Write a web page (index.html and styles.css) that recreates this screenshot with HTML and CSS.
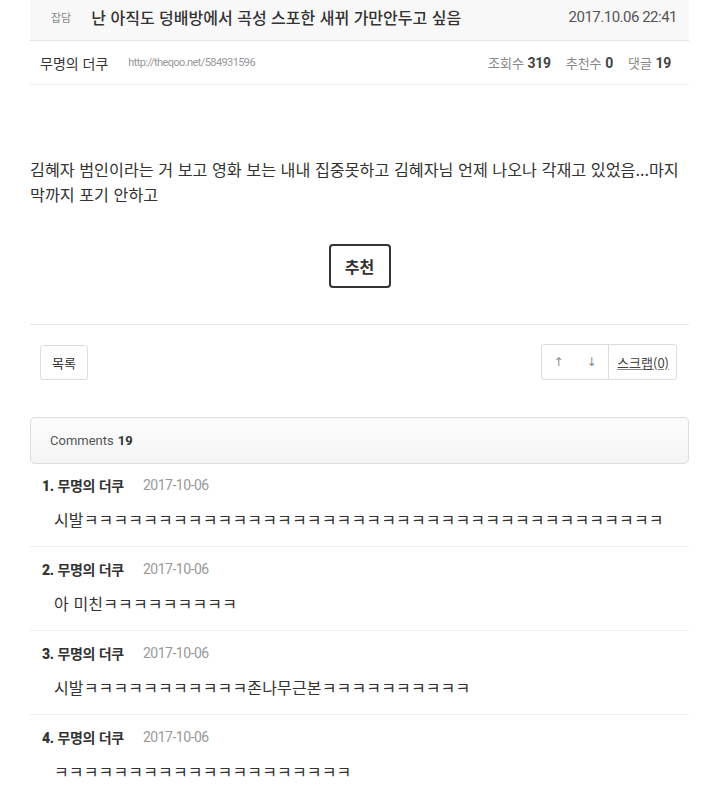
FILE: index.html
```html
<!DOCTYPE html>
<html lang="ko">
<head>
<meta charset="utf-8">
<title>theqoo</title>
<link rel="stylesheet" href="styles.css">
</head>
<body>
<div class="page">
  <div class="post-head">
    <span class="category">잡담</span>
    <h1 class="title">난 아직도 덩배방에서 곡성 스포한 새뀌 가만안두고 싶음</h1>
    <span class="post-date">2017.10.06 22:41</span>
  </div>
  <div class="post-meta">
    <span class="author">무명의 더쿠</span>
    <span class="url">http://theqoo.net/584931596</span>
    <span class="stats">
      <span class="stat">조회수 <b>319</b></span>
      <span class="stat">추천수 <b>0</b></span>
      <span class="stat">댓글 <b>19</b></span>
    </span>
  </div>
  <div class="post-body">
    <p class="content">김혜자 범인이라는 거 보고 영화 보는 내내 집중못하고 김혜자님 언제 나오나 각재고 있었음...마지막까지 포기 안하고</p>
    <div class="vote"><button class="vote-btn">추천</button></div>
  </div>
  <div class="actions">
    <button class="btn">목록</button>
    <div class="btn-group">
      <span class="arrow">↑</span>
      <span class="arrow">↓</span>
      <span class="scrap">스크랩(0)</span>
    </div>
  </div>
  <div class="comments-head">Comments <b>19</b></div>
  <ul class="comments">
    <li class="comment">
      <div class="c-head"><span class="c-author"><b>1.</b> 무명의 더쿠</span><span class="c-date">2017-10-06</span></div>
      <div class="c-text">시발ㅋㅋㅋㅋㅋㅋㅋㅋㅋㅋㅋㅋㅋㅋㅋㅋㅋㅋㅋㅋㅋㅋㅋㅋㅋㅋㅋㅋㅋㅋㅋㅋㅋㅋㅋㅋㅋㅋㅋ</div>
    </li>
    <li class="comment">
      <div class="c-head"><span class="c-author"><b>2.</b> 무명의 더쿠</span><span class="c-date">2017-10-06</span></div>
      <div class="c-text">아 미친ㅋㅋㅋㅋㅋㅋㅋㅋㅋ</div>
    </li>
    <li class="comment">
      <div class="c-head"><span class="c-author"><b>3.</b> 무명의 더쿠</span><span class="c-date">2017-10-06</span></div>
      <div class="c-text">시발ㅋㅋㅋㅋㅋㅋㅋㅋㅋㅋㅋ존나무근본ㅋㅋㅋㅋㅋㅋㅋㅋㅋㅋ</div>
    </li>
    <li class="comment">
      <div class="c-head"><span class="c-author"><b>4.</b> 무명의 더쿠</span><span class="c-date">2017-10-06</span></div>
      <div class="c-text">ㅋㅋㅋㅋㅋㅋㅋㅋㅋㅋㅋㅋㅋㅋㅋㅋㅋㅋㅋㅋ</div>
    </li>
  </ul>
</div>
</body>
</html>
```

FILE: styles.css
```css
* { box-sizing: border-box; }
html, body { margin: 0; padding: 0; background: #fff; }
body {
  font-family: "Noto Sans CJK KR", "Noto Sans", sans-serif;
  color: #333;
  overflow: hidden;
}
.page { margin: 0 30px; width: 659px; }

.post-head {
  height: 41px;
  background: #f8f8f8;
  border-bottom: 1px solid #e2e2e2;
  display: flex;
  align-items: center;
  padding: 0 12px 6px 21px;
}
.category { font-size: 11px; color: #888; margin-right: 20px; }
.title { font-size: 16px; font-weight: 500; margin: 0; color: #333; flex: 1; }
.post-date { font-family: Roboto, sans-serif; font-size: 15px; color: #555; letter-spacing: -0.5px; }

.post-meta {
  height: 44px;
  border-bottom: 1px solid #eee;
  display: flex;
  align-items: center;
  padding: 0 18px 0 10px;
}
.author { font-size: 14px; color: #333; margin-right: 20px; }
.url { font-family: Roboto, sans-serif; font-size: 11px; color: #999; letter-spacing: -0.6px; }
.stats { margin-left: auto; display: flex; gap: 15px; font-size: 13px; color: #888; }
.stat b { font-family: Roboto, sans-serif; font-size: 14px; color: #444; font-weight: 700; letter-spacing: -0.3px; }

.post-body { padding-top: 72px; border-bottom: 1px solid #e6e6e6; padding-bottom: 36px; }
.content { margin: 0; font-size: 16.2px; line-height: 25px; color: #333; }
.vote { display: flex; justify-content: center; margin-top: 37px; }
.vote-btn {
  width: 62px; height: 44px;
  border: 2px solid #333; border-radius: 4px;
  background: #fff; font-family: inherit; font-size: 16px; font-weight: 700; color: #333;
  padding: 0;
}

.actions {
  display: flex; justify-content: space-between; align-items: center;
  padding: 19px 12px 0 10px;
}
.btn {
  width: 48px; height: 35px;
  border: 1px solid #ddd; border-radius: 3px; background: #fff;
  font-family: inherit; font-size: 13px; color: #333; padding: 0;
}
.btn-group {
  display: flex; align-items: center; height: 36px;
  border: 1px solid #ddd; border-radius: 3px;
  font-size: 13px; color: #555;
}
.arrow { width: 33px; text-align: center; font-size: 12px; color: #888; font-family: "DejaVu Sans", sans-serif; }
.scrap {
  height: 100%; display: flex; align-items: center;
  border-left: 1px solid #ddd; padding: 0 7px 0 8px;
  text-decoration: underline; text-decoration-color: #888; color: #444;
}

.comments-head {
  margin-top: 37px;
  height: 47px;
  border: 1px solid #ddd; border-radius: 5px;
  background: linear-gradient(#fcfcfc, #f5f5f5);
  display: flex; align-items: center; padding-left: 19px;
  font-family: Roboto, sans-serif; font-size: 13px; color: #555;
}
.comments-head b { color: #333; font-weight: 700; margin-left: 4px; }

.comments { list-style: none; margin: 0; padding: 0; }
.comment { padding: 12px 0 14px 12px; border-bottom: 1px solid #eee; }
.comment:first-child { padding-top: 11px; }
.c-head { display: flex; align-items: center; height: 20px; }
.c-author { font-size: 14px; font-weight: 700; color: #333; width: 101px; letter-spacing: -0.3px; }
.c-author b { font-family: Roboto, sans-serif; }
.c-date { font-family: Roboto, sans-serif; font-size: 14px; color: #999; letter-spacing: -0.5px; }
.c-text { margin-top: 11px; padding-left: 12px; font-size: 16px; line-height: 26px; color: #333; white-space: nowrap; letter-spacing: 0.15px; }
```
